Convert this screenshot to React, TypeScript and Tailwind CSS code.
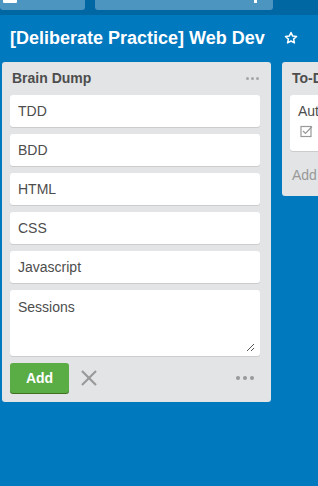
import React from "react";

const cards = ["TDD", "BDD", "HTML", "CSS", "Javascript"];

function Dots({ className = "", size = 4, gap = 3, color = "#999" }: { className?: string; size?: number; gap?: number; color?: string }) {
  return (
    <div className={"flex " + className} style={{ gap }}>
      {[0, 1, 2].map((i) => (
        <span key={i} className="rounded-full" style={{ width: size, height: size, background: color }} />
      ))}
    </div>
  );
}

export default function App() {
  return (
    <div
      className="w-[318px] h-[486px] bg-[#0079bf] overflow-hidden flex flex-col"
      style={{ fontFamily: '"Liberation Sans", Arial, sans-serif' }}
    >
      {/* top header */}
      <div className="h-[15px] bg-[#0067a3] flex items-start shrink-0 relative">
        <div className="w-[85px] h-[10px] bg-[#4d95c1] rounded-b-[3px] relative">
          <div className="absolute left-[3px] top-0 w-[14px] h-[3px] bg-white rounded-b-[1px]" />
        </div>
        <div className="ml-[10px] w-[178px] h-[10px] bg-[#4d95c1] rounded-b-[3px] relative">
          <div className="absolute left-[159px] top-0 w-[3px] h-[3px] bg-white" />
        </div>
      </div>
      {/* board title */}
      <div className="h-[46px] flex items-center shrink-0 pl-[10px]">
        <span className="text-white font-bold text-[18px] leading-none">
          [Deliberate Practice] Web Dev
        </span>
        <svg className="ml-[19px]" width="14" height="14" viewBox="0 0 24 24" fill="none" stroke="white" strokeWidth="2.6" strokeLinejoin="round">
          <path d="M12 2.5l2.9 6.2 6.6.7-5 4.5 1.4 6.6L12 17.2l-5.9 3.3 1.4-6.6-5-4.5 6.6-.7z" />
        </svg>
      </div>
      {/* lists */}
      <div className="flex items-start gap-[11px] pl-[2px] pt-[1px]">
        <div className="w-[269px] shrink-0 bg-[#e2e4e6] rounded-[3px] pb-[9px]">
          <div className="h-[33px] flex items-center justify-between pl-[10px] pr-[12px]">
            <span className="text-[14px] font-bold text-[#4d4d4d]">Brain Dump</span>
            <Dots size={3} gap={2} color="#a5a5a5" />
          </div>
          <div className="flex flex-col gap-[7px] pl-[8px] pr-[11px]">
            {cards.map((c) => (
              <div
                key={c}
                className="h-[32px] bg-white rounded-[3px] shadow-[0_1px_0_#ccc] flex items-center pl-[8px] text-[14px] text-[#4d4d4d]"
              >
                {c}
              </div>
            ))}
            <div className="h-[66px] bg-white rounded-[3px] shadow-[0_1px_0_#ccc] pl-[8px] pt-[7px] text-[14px] text-[#4d4d4d] relative">
              Sessions
              <svg className="absolute right-[5px] bottom-[4px]" width="9" height="9" viewBox="0 0 9 9" stroke="#555" strokeWidth="1">
                <line x1="1" y1="8" x2="8" y2="1" />
                <line x1="5" y1="8" x2="8" y2="5" />
              </svg>
            </div>
          </div>
          <div className="flex items-center pl-[8px] pr-[11px] mt-[7px]">
            <button className="w-[59px] h-[30px] bg-[#5aac44] rounded-[3px] shadow-[0_1px_0_#3f6f21] text-white font-bold text-[14px]">
              Add
            </button>
            <svg className="ml-[12px]" width="16" height="16" viewBox="0 0 16 16" stroke="#999" strokeWidth="2.2">
              <line x1="1" y1="1" x2="15" y2="15" />
              <line x1="15" y1="1" x2="1" y2="15" />
            </svg>
            <Dots className="ml-auto mr-[6px]" />
          </div>
        </div>
        <div className="w-[269px] shrink-0 bg-[#e2e4e6] rounded-[3px] pb-[10px]">
          <div className="h-[33px] flex items-center pl-[10px]">
            <span className="text-[14px] font-bold text-[#4d4d4d]">To-Do</span>
          </div>
          <div className="pl-[8px] pr-[11px]">
            <div className="h-[56px] bg-white rounded-[3px] shadow-[0_1px_0_#ccc] pl-[8px] pt-[6px] text-[14px] text-[#4d4d4d]">
              <div>Automation</div>
              <svg className="mt-[3px] ml-[2px]" width="13" height="13" viewBox="0 0 13 13" fill="none" stroke="#999" strokeWidth="1.2">
                <rect x="1" y="1.5" width="10" height="10" />
                <path d="M3 6l2.5 2.5L12 1.5" />
              </svg>
            </div>
          </div>
          <div className="pl-[10px] pt-[14px] text-[14px] text-[#999]">Add a card…</div>
        </div>
      </div>
    </div>
  );
}
